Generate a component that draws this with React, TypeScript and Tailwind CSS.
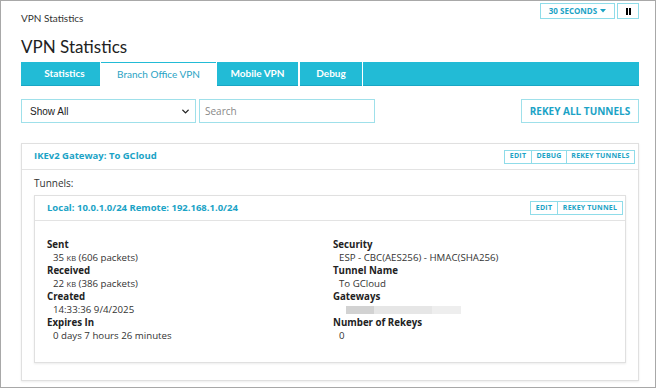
import { ChevronDown } from 'lucide-react';

const cyan = 'text-[#1ba3c6]';

function SmallButtons({ items }: { items: [string, string][] }) {
  return (
    <div className="flex h-[14px] border border-[#8fdce9]">
      {items.map(([l, w], i) => (
        <div
          key={l}
          className={`flex items-center justify-center ${w} text-[7px] font-bold tracking-[0.2px] ${cyan} ${i > 0 ? 'border-l border-[#8fdce9]' : ''}`}
        >
          {l}
        </div>
      ))}
    </div>
  );
}

function Field({ label, children }: { label: string; children: React.ReactNode }) {
  return (
    <div>
      <div className="h-[13px] leading-[13px] font-bold text-[#222]">{label}</div>
      <div className="h-[13px] leading-[13px] pl-[6px] text-[#333] flex items-center">{children}</div>
    </div>
  );
}

export default function App() {
  return (
    <div className="w-[658px] h-[388px] bg-white" style={{ fontFamily: '"Open Sans", Arial, sans-serif' }}>
      <div className="w-[656px] h-[388px] border border-[#a8a8a8] pl-[20px] pr-[16px]">
        {/* Top row */}
        <div className="flex justify-between items-start pt-[2px] h-[18px]">
          <div className="pt-[9px] text-[10px] leading-[12px] text-[#333]" style={{ fontFamily: 'Lato, sans-serif' }}>
            VPN Statistics
          </div>
          <div className="flex gap-[2px]">
            <div className={`flex items-center gap-[3px] h-[16px] w-[75px] justify-center border border-[#8fdce9] text-[8px] font-bold ${cyan}`}>
              30 SECONDS
              <svg width="6" height="4" viewBox="0 0 6 4"><path d="M0 0h6L3 3.5z" fill="#1ba3c6" /></svg>
            </div>
            <div className="flex items-center justify-center h-[16px] w-[22px] border border-[#8fdce9]">
              <div className="flex gap-[1px]">
                <div className="w-[2px] h-[7px] bg-black" />
                <div className="w-[2px] h-[7px] bg-black" />
              </div>
            </div>
          </div>
        </div>

        {/* Heading */}
        <h1 className="mt-[18px] h-[20px] text-[17px] leading-[20px] text-[#222]" style={{ fontFamily: 'Lato, sans-serif' }}>
          VPN Statistics
        </h1>

        {/* Tabs */}
        <div className="mt-[5px] flex h-[24px] text-[10px]" style={{ fontFamily: 'Lato, sans-serif' }}>
          <div className="w-[79px] flex items-center justify-center pl-[8px] bg-[#22bbd6] text-white font-bold border-b border-[#1aa6c4]">Statistics</div>
          <div className="w-[115px] ml-[1px] flex items-center justify-center bg-white text-[#2aa3c4] border-t border-[#22bbd6]">Branch Office VPN</div>
          <div className="w-[81px] ml-[1px] flex items-center justify-center bg-[#22bbd6] text-white font-bold border-b border-[#1aa6c4]">Mobile VPN</div>
          <div className="w-[62px] ml-[2px] flex items-center justify-center bg-[#22bbd6] text-white font-bold border-b border-[#1aa6c4]">Debug</div>
          <div className="flex-1 ml-[1px] bg-[#22bbd6] border-b border-[#1aa6c4]" />
        </div>

        {/* Filter row */}
        <div className="mt-[13px] flex h-[24px] items-stretch">
          <div className="w-[175px] flex items-center justify-between border border-[#9fe0ea] pl-[8px] pr-[4px] text-[10px] text-[#222]" style={{ fontFamily: 'Arial, sans-serif' }}>
            Show All
            <ChevronDown className="w-[11px] h-[11px] text-[#222]" strokeWidth={3} />
          </div>
          <div className="w-[176px] ml-[3px] flex items-center border border-[#9fe0ea] pl-[5px] text-[10px] text-[#888]">
            Search
          </div>
          <div className="flex-1" />
          <div className={`w-[118px] flex items-center justify-center border border-[#9fe0ea] text-[10px] font-bold ${cyan}`}>
            REKEY ALL TUNNELS
          </div>
        </div>

        {/* Gateway card */}
        <div className="mt-[20px] h-[238px] border border-[#e0e0e0] shadow-[0_1px_2px_rgba(0,0,0,0.08)] text-[10px]">
          <div className="h-[26px] flex items-center justify-between pl-[12px] pr-[3px] border-b border-[#e3e3e3]">
            <div className={`font-bold text-[9.5px] ${cyan}`}>IKEv2 Gateway: To GCloud</div>
            <SmallButtons items={[['EDIT', 'w-[26px]'], ['DEBUG', 'w-[35px]'], ['REKEY TUNNELS', 'w-[68px]']]} />
          </div>
          <div className="px-[12px]">
            <div className="pt-[6px] h-[20px] leading-[14px] text-[#333]">Tunnels:</div>
            <div className="mt-[5px] border border-[#e0e0e0] shadow-[0_1px_2px_rgba(0,0,0,0.08)] text-[9.7px]">
              <div className="h-[25px] flex items-center justify-between pl-[12px] pr-[2px] border-b border-[#e3e3e3]">
                <div className={`font-bold text-[9.5px] ${cyan}`}>Local: 10.0.1.0/24 Remote: 192.168.1.0/24</div>
                <SmallButtons items={[['EDIT', 'w-[26px]'], ['REKEY TUNNEL', 'w-[65px]']]} />
              </div>
              <div className="grid grid-cols-[286px_1fr] pl-[12px] pt-[17px] pb-[20px]">
                <div>
                  <Field label="Sent"><span>35 <span className="text-[7.5px]">KB</span> (606 packets)</span></Field>
                  <Field label="Received"><span>22 <span className="text-[7.5px]">KB</span> (386 packets)</span></Field>
                  <Field label="Created">14:33:36 9/4/2025</Field>
                  <Field label="Expires In">0 days 7 hours 26 minutes</Field>
                </div>
                <div>
                  <Field label="Security">ESP - CBC(AES256) - HMAC(SHA256)</Field>
                  <Field label="Tunnel Name">To GCloud</Field>
                  <Field label="Gateways">
                    <div className="flex w-[115px] h-[8px] ml-[7px]">
                      <div className="w-[28px] bg-[#d2d2d2]" />
                      <div className="w-[58px] bg-[#e6e6e6]" />
                      <div className="flex-1 bg-[#eeeeee]" />
                    </div>
                  </Field>
                  <Field label="Number of Rekeys">0</Field>
                </div>
              </div>
            </div>
          </div>
        </div>
      </div>
    </div>
  );
}
